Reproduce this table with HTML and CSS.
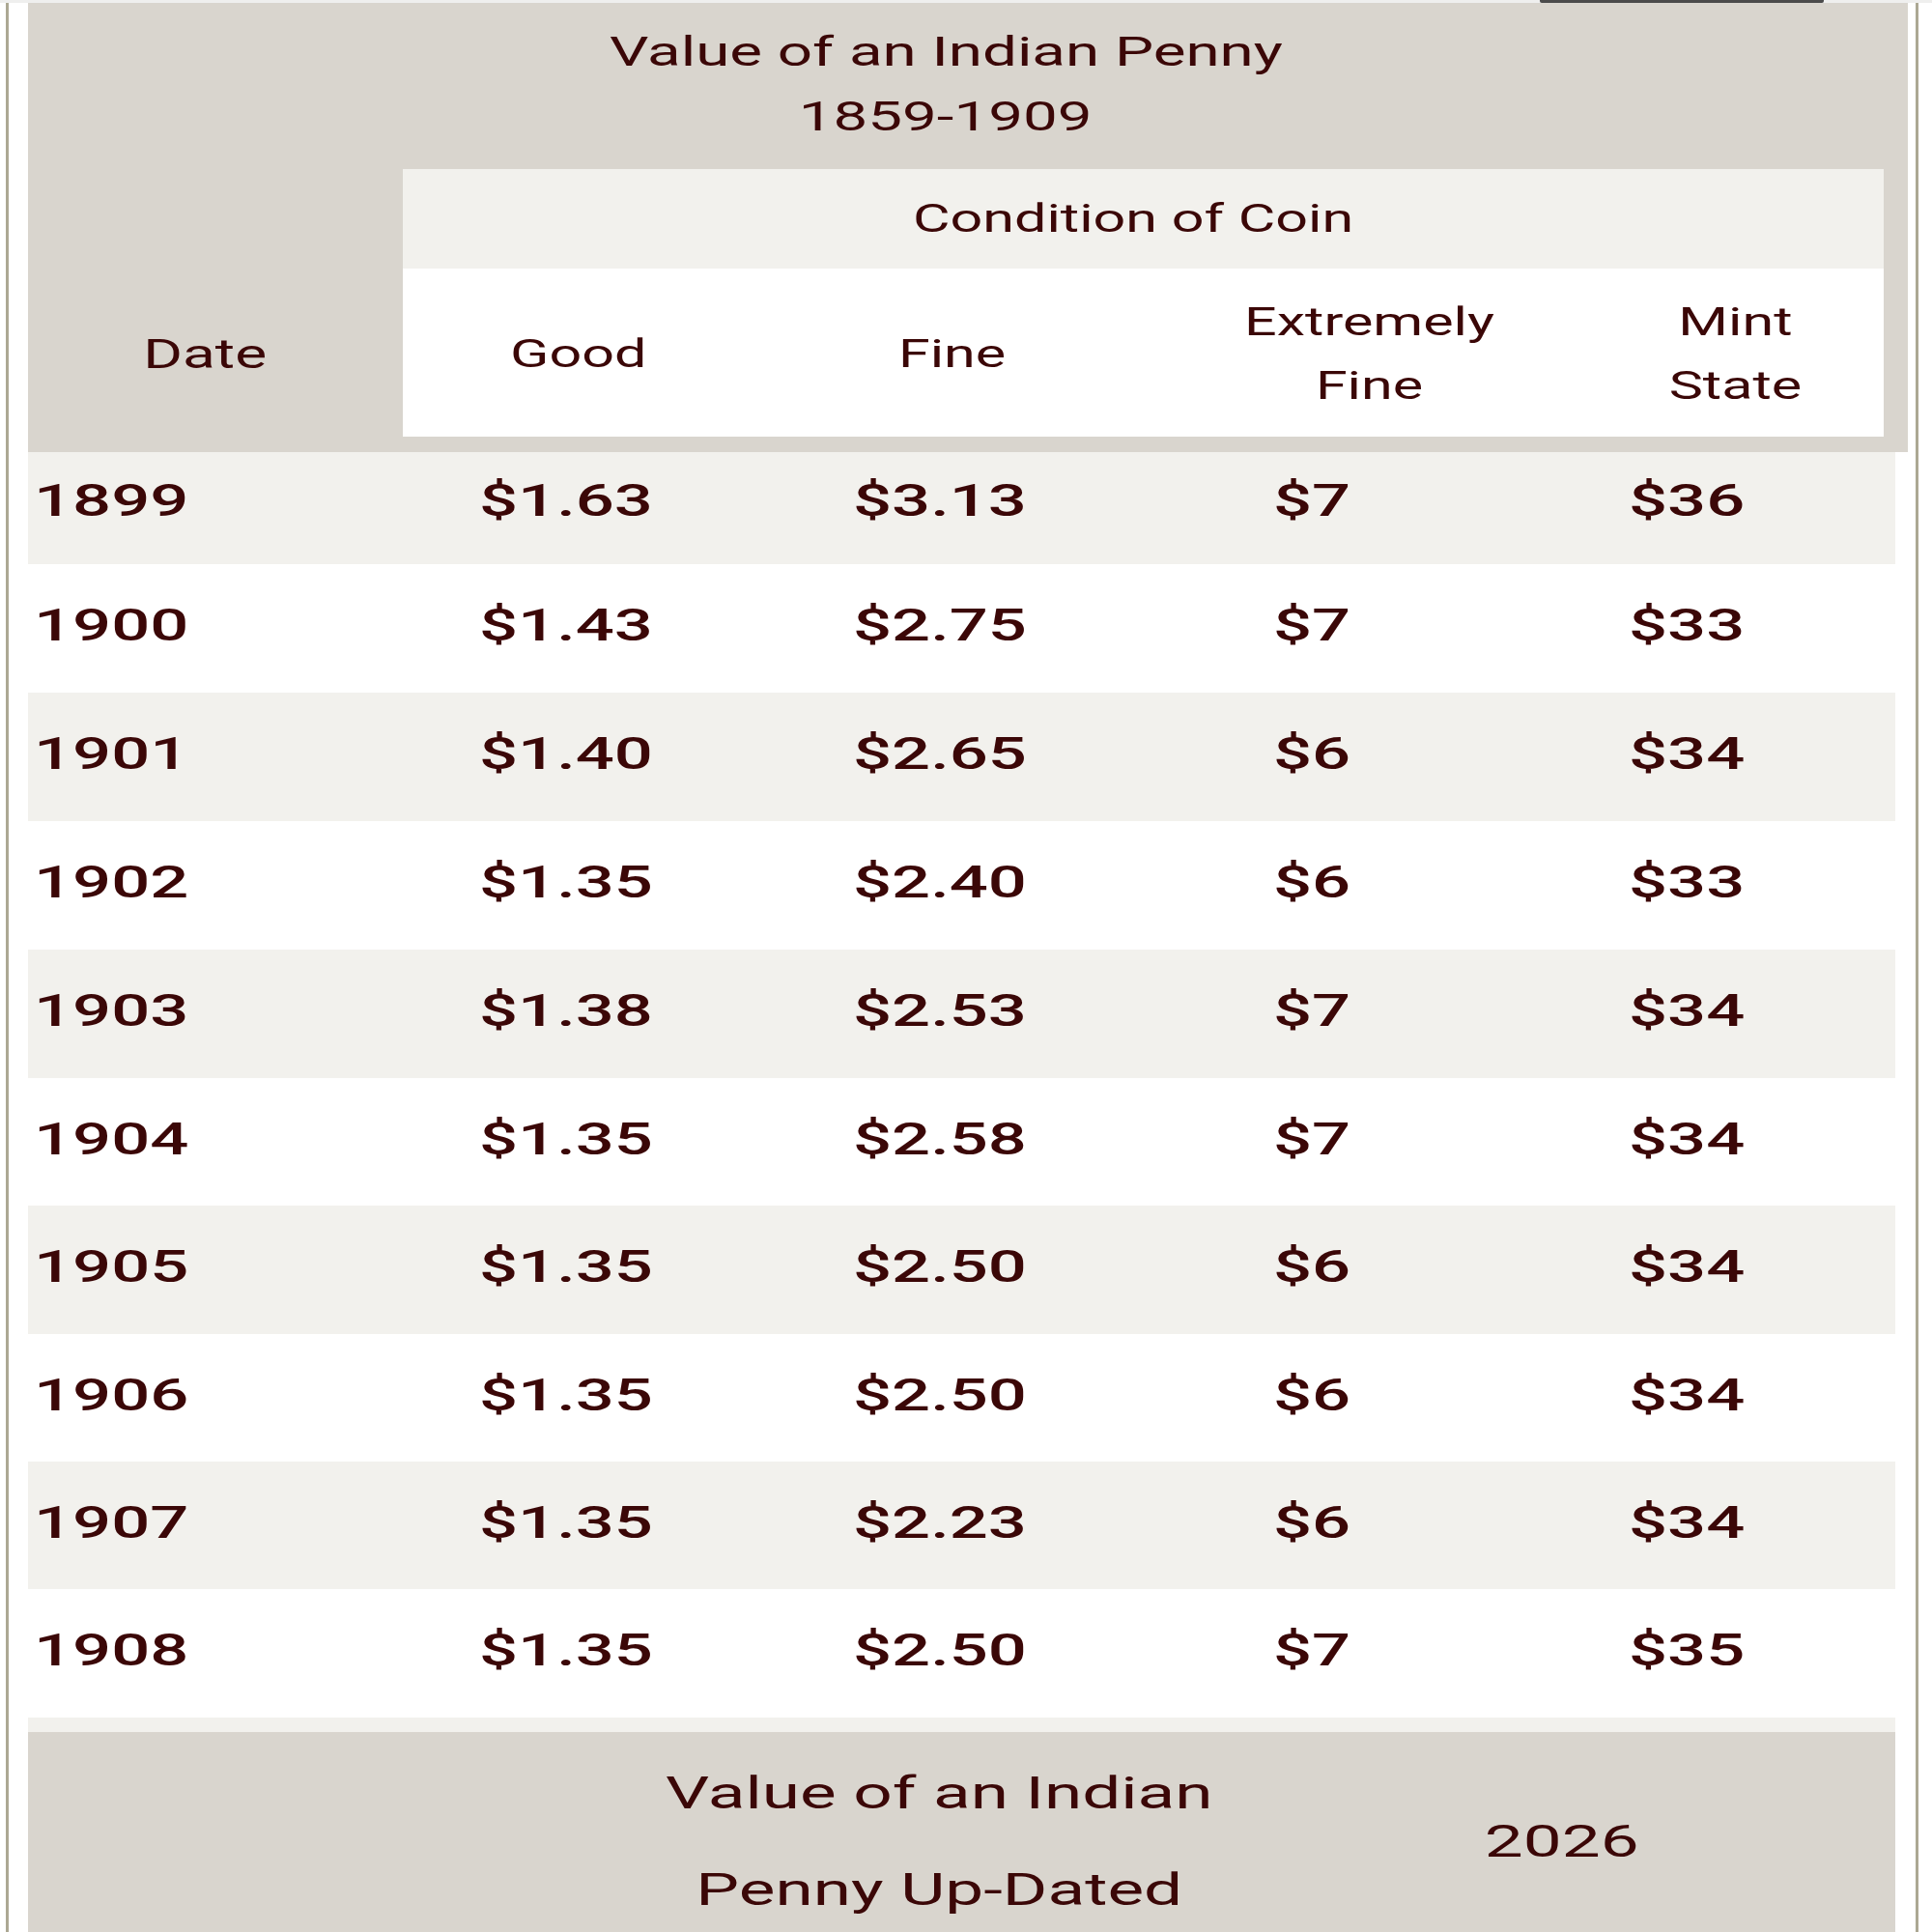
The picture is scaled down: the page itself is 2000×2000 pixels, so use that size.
FILE: index.html
```html
<!DOCTYPE html>
<html lang="en">
<head>
<meta charset="utf-8">
<title>Value of an Indian Penny</title>
<link rel="stylesheet" href="styles.css">
</head>
<body>
<div class="screen">
  <div class="topbar"><div class="topbar-mark"></div></div>
  <div class="frame">
    <div class="rule rule-left"></div>
    <div class="table">
      <div class="thead">
        <div class="title">
          <div class="line"><span class="t">Value of an Indian Penny</span></div>
          <div class="line"><span class="t">1859-1909</span></div>
        </div>
        <div class="hgrid">
          <div class="hcell empty"></div>
          <div class="hcell cond"><span class="t">Condition of Coin</span></div>
          <div class="hcell date"><span class="t">Date</span></div>
          <div class="sub">
            <div class="scell"><span class="t">Good</span></div>
            <div class="scell"><span class="t">Fine</span></div>
            <div class="scell"><span class="t">Extremely<br>Fine</span></div>
            <div class="scell"><span class="t">Mint<br>State</span></div>
          </div>
        </div>
      </div>
      <div class="tbody">
        <div class="row odd first"><div class="c"><span class="t l">1899</span></div><div class="c"><span class="t l">$1.63</span></div><div class="c"><span class="t l">$3.13</span></div><div class="c"><span class="t l">$7</span></div><div class="c"><span class="t l">$36</span></div></div>
        <div class="row"><div class="c"><span class="t l">1900</span></div><div class="c"><span class="t l">$1.43</span></div><div class="c"><span class="t l">$2.75</span></div><div class="c"><span class="t l">$7</span></div><div class="c"><span class="t l">$33</span></div></div>
        <div class="row odd"><div class="c"><span class="t l">1901</span></div><div class="c"><span class="t l">$1.40</span></div><div class="c"><span class="t l">$2.65</span></div><div class="c"><span class="t l">$6</span></div><div class="c"><span class="t l">$34</span></div></div>
        <div class="row"><div class="c"><span class="t l">1902</span></div><div class="c"><span class="t l">$1.35</span></div><div class="c"><span class="t l">$2.40</span></div><div class="c"><span class="t l">$6</span></div><div class="c"><span class="t l">$33</span></div></div>
        <div class="row odd"><div class="c"><span class="t l">1903</span></div><div class="c"><span class="t l">$1.38</span></div><div class="c"><span class="t l">$2.53</span></div><div class="c"><span class="t l">$7</span></div><div class="c"><span class="t l">$34</span></div></div>
        <div class="row short"><div class="c"><span class="t l">1904</span></div><div class="c"><span class="t l">$1.35</span></div><div class="c"><span class="t l">$2.58</span></div><div class="c"><span class="t l">$7</span></div><div class="c"><span class="t l">$34</span></div></div>
        <div class="row odd"><div class="c"><span class="t l">1905</span></div><div class="c"><span class="t l">$1.35</span></div><div class="c"><span class="t l">$2.50</span></div><div class="c"><span class="t l">$6</span></div><div class="c"><span class="t l">$34</span></div></div>
        <div class="row short"><div class="c"><span class="t l">1906</span></div><div class="c"><span class="t l">$1.35</span></div><div class="c"><span class="t l">$2.50</span></div><div class="c"><span class="t l">$6</span></div><div class="c"><span class="t l">$34</span></div></div>
        <div class="row odd short"><div class="c"><span class="t l">1907</span></div><div class="c"><span class="t l">$1.35</span></div><div class="c"><span class="t l">$2.23</span></div><div class="c"><span class="t l">$6</span></div><div class="c"><span class="t l">$34</span></div></div>
        <div class="row"><div class="c"><span class="t l">1908</span></div><div class="c"><span class="t l">$1.35</span></div><div class="c"><span class="t l">$2.50</span></div><div class="c"><span class="t l">$7</span></div><div class="c"><span class="t l">$35</span></div></div>
      </div>
      <div class="strip"></div>
      <div class="tfoot">
        <div class="fpad"></div>
        <div class="ftext"><span class="t wide">Value of an Indian<br>Penny Up-Dated</span></div>
        <div class="fyear"><span class="t wide">2026</span></div>
      </div>
    </div>
    <div class="rule rule-right"></div>
  </div>
</div>
</body>
</html>
```

FILE: styles.css
```css
html, body {
  margin: 0;
  padding: 0;
  background: #ffffff;
}

body {
  font-family: Roboto, "Liberation Sans", Arial, sans-serif;
  color: #3b0707;
  font-weight: 400;
}

.screen {
  display: flex;
  flex-direction: column;
  width: 2000px;
  height: 2000px;
  overflow: hidden;
}

.topbar {
  height: 3px;
  background: #efefee;
  display: flex;
  flex-shrink: 0;
}

.topbar-mark {
  margin-left: 1594px;
  width: 294px;
  height: 3px;
  background: #4b4b4b;
  border-radius: 0 0 2px 2px;
}

.frame {
  display: flex;
  flex: 1;
  align-items: stretch;
}

.rule {
  width: 3px;
  background: #aca893;
  flex-shrink: 0;
}

.rule-left {
  margin-left: 6px;
}

.rule-right {
  margin-left: 8px;
}

.table {
  margin-left: 20px;
  width: 1946px;
  display: flex;
  flex-direction: column;
  flex-shrink: 0;
}

/* stretched text (the screenshot is widened horizontally) */
.t {
  display: inline-block;
  transform: scaleX(1.48);
  transform-origin: 50% 50%;
  white-space: nowrap;
}

.t.l {
  transform: scaleX(1.5);
  transform-origin: 0 50%;
}

.t.wide {
  transform: scaleX(1.545);
}

/* header */
.thead {
  background: #d9d5ce;
  padding-right: 25px;
  padding-bottom: 16px;
}

.title {
  height: 172px;
  box-sizing: border-box;
  padding-top: 17px;
  padding-right: 21px;
  font-size: 43px;
  line-height: 67px;
  text-align: center;
}

.hgrid {
  display: grid;
  grid-template-columns: 388px 1533px;
  grid-template-rows: 103px 174px;
}

.hcell {
  display: flex;
  align-items: center;
  justify-content: center;
  font-size: 40px;
  line-height: 66px;
}

.cond {
  background: #f2f1ed;
  padding-right: 21px;
}

.date {
  padding-right: 22px;
  padding-top: 3px;
  font-size: 42px;
}

.sub {
  background: #ffffff;
  display: grid;
  grid-template-columns: 364px 410px 452px 307px;
}

.scell {
  display: flex;
  align-items: center;
  justify-content: center;
  text-align: center;
  font-size: 40px;
  line-height: 66px;
  padding-top: 3px;
}

/* body rows */
.tbody {
  width: 1933px;
  display: flex;
  flex-direction: column;
}

.row {
  display: grid;
  grid-template-columns: 461px 387px 435px 368px 282px;
  height: 133px;
  background: #ffffff;
  font-size: 47px;
  font-weight: 500;
  line-height: 56px;
}

.row.short {
  height: 132px;
}

.row.odd {
  background: #f2f1ed;
}

.row.first {
  height: 116px;
  padding-bottom: 10px;
  box-sizing: border-box;
}

.c {
  display: flex;
  align-items: center;
  padding-left: 6px;
  padding-bottom: 7px;
}

.strip {
  width: 1933px;
  height: 15px;
  background: #f2f1ed;
}

/* footer */
.tfoot {
  width: 1933px;
  flex: 1;
  background: #d9d5ce;
  display: grid;
  grid-template-columns: 461px 964px 326px;
  font-size: 46px;
  line-height: 100px;
}

.ftext {
  text-align: center;
  padding-top: 13px;
}

.fyear {
  text-align: center;
  padding-top: 63px;
}
```
